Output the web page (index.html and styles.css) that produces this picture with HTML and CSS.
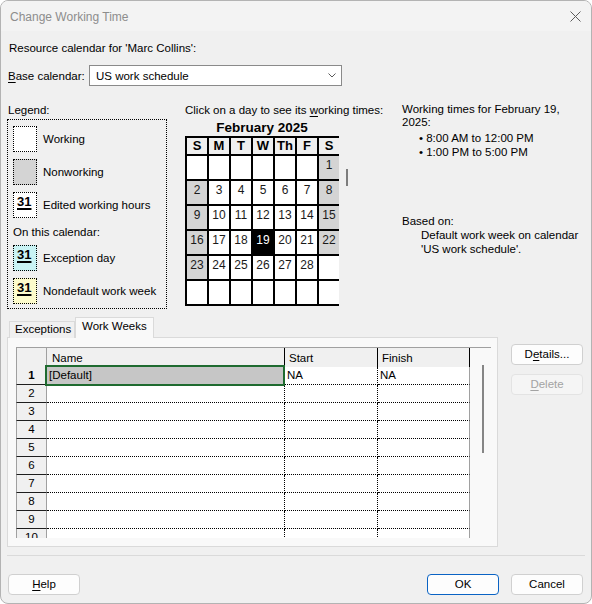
FILE: index.html
```html
<!DOCTYPE html>
<html>
<head>
<meta charset="utf-8">
<title>Change Working Time</title>
<link rel="stylesheet" href="styles.css">
</head>
<body>
<div class="window">
  <div class="titlebar">
    <span class="title">Change Working Time</span>
    <svg class="close" width="11" height="11" viewBox="0 0 11 11"><path d="M0.5 0.5L10.5 10.5M10.5 0.5L0.5 10.5" stroke="#5c5c5c" stroke-width="1" fill="none"/></svg>
  </div>
  <div class="content">
    <div class="res-label">Resource calendar for 'Marc Collins':</div>
    <div class="base-row">
      <span class="base-label"><u>B</u>ase calendar:</span>
      <div class="select">
        <span>US work schedule</span>
        <svg class="chev" width="8" height="5" viewBox="0 0 8 5"><path d="M0.5 0.5L4 4L7.5 0.5" stroke="#5a5a5a" stroke-width="1" fill="none"/></svg>
      </div>
    </div>

    <div class="main">
      <div class="legend">
        <div class="legend-title">Legend:</div>
        <div class="legend-box">
          <div class="leg-item"><div class="sw"></div><span>Working</span></div>
          <div class="leg-item"><div class="sw sw-non"></div><span>Nonworking</span></div>
          <div class="leg-item"><div class="sw"><b>31</b></div><span>Edited working hours</span></div>
          <div class="leg-sub">On this calendar:</div>
          <div class="leg-item leg-exc"><div class="sw sw-exc"><b>31</b></div><span>Exception day</span></div>
          <div class="leg-item"><div class="sw sw-nd"><b>31</b></div><span>Nondefault work week</span></div>
        </div>
      </div>

      <div class="cal">
        <div class="cal-hint">Click on a day to see its <u>w</u>orking times:</div>
        <div class="cal-month">February 2025</div>
        <div class="cal-grid">
          <div class="dh">S</div><div class="dh">M</div><div class="dh">T</div><div class="dh">W</div><div class="dh">Th</div><div class="dh">F</div><div class="dh">S</div>
          <div class="d"></div><div class="d"></div><div class="d"></div><div class="d"></div><div class="d"></div><div class="d"></div><div class="d we">1</div>
          <div class="d we">2</div><div class="d">3</div><div class="d">4</div><div class="d">5</div><div class="d">6</div><div class="d">7</div><div class="d we">8</div>
          <div class="d we">9</div><div class="d">10</div><div class="d">11</div><div class="d">12</div><div class="d">13</div><div class="d">14</div><div class="d we">15</div>
          <div class="d we">16</div><div class="d">17</div><div class="d">18</div><div class="d sel">19</div><div class="d">20</div><div class="d">21</div><div class="d we">22</div>
          <div class="d we">23</div><div class="d">24</div><div class="d">25</div><div class="d">26</div><div class="d">27</div><div class="d">28</div><div class="d"></div>
          <div class="d"></div><div class="d"></div><div class="d"></div><div class="d"></div><div class="d"></div><div class="d"></div><div class="d"></div>
        </div>
      </div>
      <div class="cal-scroll"></div>

      <div class="info">
        <div class="info-head">Working times for February 19,<br>2025:</div>
        <div class="info-times">
          <div class="bullet">• 8:00 AM to 12:00 PM</div>
          <div class="bullet">• 1:00 PM to 5:00 PM</div>
        </div>
        <div class="based">Based on:</div>
        <div class="based-text">Default work week on calendar<br>'US work schedule'.</div>
      </div>
    </div>

    <div class="tabs-area">
      <div class="tabs-left">
        <div class="tabstrip">
          <div class="tab">Exceptions</div>
          <div class="tab active">Work Weeks</div>
        </div>
        <div class="panel">
          <div class="grid">
            <div class="table">
              <div class="hrow">
                <div class="rh hrh"></div>
                <div class="hc c-name">Name</div>
                <div class="hc c-start">Start</div>
                <div class="hc c-fin">Finish</div>
              </div>
              <div class="row"><div class="rh rh-sel">1</div><div class="c c-name">[Default]</div><div class="c c-start">NA</div><div class="c c-fin">NA</div></div>
              <div class="row"><div class="rh">2</div><div class="c c-name"></div><div class="c c-start"></div><div class="c c-fin"></div></div>
              <div class="row"><div class="rh">3</div><div class="c c-name"></div><div class="c c-start"></div><div class="c c-fin"></div></div>
              <div class="row"><div class="rh">4</div><div class="c c-name"></div><div class="c c-start"></div><div class="c c-fin"></div></div>
              <div class="row"><div class="rh">5</div><div class="c c-name"></div><div class="c c-start"></div><div class="c c-fin"></div></div>
              <div class="row"><div class="rh">6</div><div class="c c-name"></div><div class="c c-start"></div><div class="c c-fin"></div></div>
              <div class="row"><div class="rh">7</div><div class="c c-name"></div><div class="c c-start"></div><div class="c c-fin"></div></div>
              <div class="row"><div class="rh">8</div><div class="c c-name"></div><div class="c c-start"></div><div class="c c-fin"></div></div>
              <div class="row"><div class="rh">9</div><div class="c c-name"></div><div class="c c-start"></div><div class="c c-fin"></div></div>
              <div class="row"><div class="rh">10</div><div class="c c-name"></div><div class="c c-start"></div><div class="c c-fin"></div></div>
            </div>
            <div class="vscroll"><div class="vthumb"></div></div>
            <div class="selbox">[Default]</div>
          </div>
        </div>
      </div>
      <div class="side-buttons">
        <div class="btn">D<u>e</u>tails...</div>
        <div class="btn disabled"><u>D</u>elete</div>
      </div>
    </div>

    <div class="sep"></div>

    <div class="footer">
      <div class="btn"><u>H</u>elp</div>
      <div class="btn btn-ok">OK</div>
      <div class="btn btn-cancel">Cancel</div>
    </div>
  </div>
</div>
</body>
</html>
```

FILE: styles.css
```css
* { box-sizing: border-box; }
html, body { margin: 0; padding: 0; }
body {
  width: 592px;
  height: 604px;
  background: #ffffff;
  font-family: "Liberation Sans", Arial, sans-serif;
  font-size: 11.5px;
  color: #000;
  overflow: hidden;
}
u { text-decoration: underline; text-underline-offset: 2px; }

.window {
  width: 592px;
  height: 604px;
  border: 1px solid #b3b3b3;
  border-radius: 8px;
  background: #f0f0f0;
  overflow: hidden;
  display: flex;
  flex-direction: column;
}

.titlebar {
  height: 30px;
  flex: none;
  background: #f3f3f3;
  display: flex;
  align-items: center;
  justify-content: space-between;
  padding: 0 10px 0 9px;
}
.title { color: #8d8d8d; font-size: 12px; padding-top: 1px; }
.close { margin-top: 0; }

.content { display: flex; flex-direction: column; }

.res-label { margin: 10px 0 0 8px; line-height: 15px; }

.base-row { margin: 9px 0 0 7px; display: flex; align-items: center; height: 21px; }
.base-label { width: 81px; }
.select {
  width: 253px;
  height: 21px;
  background: #fff;
  border: 1px solid #8a8a8a;
  display: flex;
  align-items: center;
  justify-content: space-between;
  padding: 0 5px 0 6px;
}

.main { margin-top: 17px; display: flex; align-items: flex-start; height: 206px; }

.legend { margin-left: 6px; width: 160px; }
.legend-title { line-height: 15px; height: 16px; padding-left: 1px; }
.legend-box {
  height: 190px;
  border: 1px dotted #000;
  padding: 6px 0 0 5px;
}
.leg-item { display: flex; align-items: center; height: 26px; margin-bottom: 7px; }
.leg-item span { margin-left: 6px; }
.sw {
  width: 24px;
  height: 26px;
  border: 1px dotted #000;
  background: #fff;
  padding: 2px 0 0 3px;
  align-self: stretch;
}
.sw b {
  display: block;
  font-size: 13px;
  line-height: 14px;
  font-weight: bold;
  text-decoration: underline;
  text-decoration-thickness: 1.5px;
  text-underline-offset: 2px;
}
.sw-non { background: #d4d4d4; }
.sw-exc { background: #c9f3f4; }
.sw-nd { background: #fcfbcb; }
.leg-sub { line-height: 15px; margin: 0 0 5px 0; }

.cal { margin-left: 18px; width: 154px; }
.cal-hint { line-height: 15px; white-space: nowrap; }
.cal-month {
  margin-top: 1px;
  line-height: 17px;
  font-size: 13.5px;
  font-weight: bold;
  text-align: center;
}
.cal-grid {
  display: grid;
  grid-template-columns: repeat(7, 20px);
  grid-template-rows: 16px repeat(6, 23px);
  gap: 2px;
  padding: 2px 0 2px 2px;
  background: #000;
  width: 154px;
}
.dh {
  background: #efefef;
  font-weight: bold;
  font-size: 13px;
  line-height: 16px;
  text-align: center;
}
.d {
  background: #fff;
  font-size: 12px;
  line-height: 14px;
  padding-top: 2px;
  text-align: center;
  color: #1a1a1a;
}
.d.we { background: #d4d4d4; }
.d.sel { background: #000; color: #fff; }

.cal-scroll { width: 2px; height: 17px; margin: 66px 0 0 7px; background: #7d7d7d; }

.info { margin-left: 54px; }
.info-head { line-height: 13px; }
.info-times { margin-top: 2px; }
.bullet { line-height: 14px; padding-left: 17px; }
.based { margin-top: 55px; line-height: 14px; }
.based-text { line-height: 14px; padding-left: 19px; }

.tabs-area { margin-top: 8px; display: flex; align-items: flex-start; }
.tabs-left { margin-left: 6px; width: 491px; }
.tabstrip { display: flex; align-items: flex-end; height: 21px; position: relative; z-index: 1; }
.tab {
  height: 17px;
  margin-left: 2px;
  width: 66px;
  border: 1px solid #dadada;
  border-bottom: none;
  padding-left: 5px;
  line-height: 15px;
  background: #f0f0f0;
}
.tab.active {
  height: 21px;
  margin-left: 0;
  width: 79px;
  background: #f9f9f9;
  padding-left: 6px;
  line-height: 17px;
}
.panel {
  margin-top: -1px;
  height: 210px;
  background: #f9f9f9;
  border: 1px solid #dadada;
  padding: 9px 6px 0 8px;
}
.grid {
  position: relative;
  width: 475px;
  height: 191px;
  overflow: hidden;
  display: flex;
}
.table { width: 454px; flex: none; }
.hrow { display: flex; height: 20px; border-top: 1px solid #a0a0a0; background: #f0f0f0; }
.row { display: flex; height: 18px; }
.rh {
  width: 31px;
  flex: none;
  border-left: 1px solid #a0a0a0;
  border-right: 1px solid #a0a0a0;
  border-bottom: 1px solid #1e1e1e;
  background: #f0f0f0;
  text-align: center;
  line-height: 17px;
}
.hrh { border-bottom: none; }
.rh-sel { font-weight: bold; }
.hc { line-height: 18px; padding: 1px 0 0 5px; border-right: 1px solid #000; }
.hc.c-start, .hc.c-fin { padding-left: 4px; }
.c-name { width: 238px; flex: none; }
.c-start { width: 93px; flex: none; }
.c-fin { width: 92px; flex: none; }
.c {
  background: #fff;
  border-right: 1px dotted #000;
  border-bottom: 1px dotted #000;
  line-height: 17px;
  padding-left: 2px;
}
.c.c-fin { border-right: 1px solid #a0a0a0; }
.vscroll { width: 21px; flex: none; border-top: 1px solid #a0a0a0; position: relative; }
.vthumb { width: 2px; height: 88px; margin: 17px 0 0 12px; background: #868686; }
.selbox {
  position: absolute;
  left: 29px;
  top: 18px;
  width: 240px;
  height: 21px;
  background: #c6c6c6;
  border: 2px solid #1f6b30;
  padding-left: 2px;
  line-height: 17px;
}

.side-buttons { margin-left: 13px; padding-top: 27px; display: flex; flex-direction: column; gap: 9px; }

.btn {
  width: 72px;
  height: 21px;
  border: 1px solid #d0d0d0;
  border-radius: 4px;
  background: #fdfdfd;
  text-align: center;
  line-height: 19px;
}
.btn.disabled { background: #f5f5f5; border-color: #e3e3e3; color: #a3a3a3; }

.sep { margin: 8px 0 0 6px; width: 578px; height: 1px; background: #dadada; }

.footer { margin: 18px 0 0 7px; display: flex; }
.btn-ok { margin-left: 347px; border-color: #0a63c4; }
.btn-cancel { margin-left: 12px; }
```
